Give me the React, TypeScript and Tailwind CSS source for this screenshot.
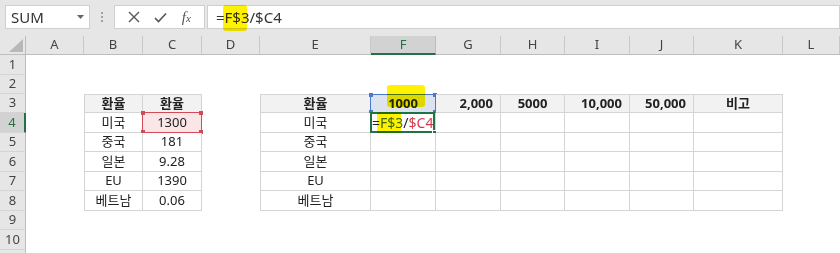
import React from "react";

const COLS = ["A", "B", "C", "D", "E", "F", "G", "H", "I", "J", "K", "L"];
const ROWS = [1, 2, 3, 4, 5, 6, 7, 8, 9, 10, 11];

const T1: Record<number, [string, string]> = {
  3: ["환율", "환율"],
  4: ["미국", "1300"],
  5: ["중국", "181"],
  6: ["일본", "9.28"],
  7: ["EU", "1390"],
  8: ["베트남", "0.06"],
};

const T2E: Record<number, string> = {
  3: "환율",
  4: "미국",
  5: "중국",
  6: "일본",
  7: "EU",
  8: "베트남",
};

// row 3 headings of the second table, columns F..K
const T2H: Record<number, { text: string; right?: boolean }> = {
  5: { text: "1000" },
  6: { text: "2,000", right: true },
  7: { text: "5000" },
  8: { text: "10,000", right: true },
  9: { text: "50,000", right: true },
  10: { text: "비고" },
};

function Corners({ color }: { color: string }) {
  return (
    <>
      <span className={`absolute -left-[2px] -top-[2px] w-[4px] h-[4px] ${color}`} />
      <span className={`absolute -right-[2px] -top-[2px] w-[4px] h-[4px] ${color}`} />
      <span className={`absolute -left-[2px] -bottom-[2px] w-[4px] h-[4px] ${color}`} />
      <span className={`absolute -right-[2px] -bottom-[2px] w-[4px] h-[4px] ${color}`} />
    </>
  );
}

function Cell({ r, c }: { r: number; c: number }) {
  const inT1 = r >= 3 && r <= 8 && (c === 1 || c === 2);
  const inT2 = r >= 3 && r <= 8 && c >= 4 && c <= 10;
  if (!inT1 && !inT2) return <div className="bg-white" />;

  let cls = "relative flex items-center justify-center whitespace-nowrap border-r border-b border-[#d4d4d4] text-[#222]";
  if (c === 1 || c === 4) cls += " border-l";
  if (r === 3) cls += " border-t bg-[#f2f2f2] font-bold";
  else cls += " bg-white";

  if (inT1) {
    const text = T1[r][c - 1];
    if (r === 4 && c === 2) {
      return (
        <div className={cls}>
          <div className="absolute -left-px -top-px -right-px -bottom-px border border-[#d24a57] bg-[#fbe6e7]">
            <Corners color="bg-[#d24a57]" />
          </div>
          <span className="relative">{text}</span>
        </div>
      );
    }
    return <div className={cls}>{text}</div>;
  }

  if (c === 4) return <div className={cls}>{T2E[r]}</div>;

  if (r === 3) {
    const h = T2H[c];
    if (c === 5) {
      return (
        <div className={cls}>
          <div className="absolute -left-px -top-px -right-px -bottom-px border border-[#4a78cf] bg-[#dde3ee]">
            <Corners color="bg-[#4a78cf]" />
          </div>
          <span className="relative">{h.text}</span>
        </div>
      );
    }
    return (
      <div className={h.right ? cls + " justify-end pr-[7px]" : cls}>{h.text}</div>
    );
  }

  if (r === 4 && c === 5) {
    return (
      <div className={cls + " justify-start"}>
        <div className="absolute -left-px -top-px right-0 -bottom-px border-2 border-[#217346]">
          <span className="absolute -right-[4px] -bottom-[4px] w-[5px] h-[5px] bg-[#217346] border border-white" />
        </div>
        <span className="relative pl-[1px] text-[14px]">
          =<span className="text-[#3f6fc8]">F$3</span>/<span className="text-[#d8384c]">$C4</span>
        </span>
      </div>
    );
  }

  return <div className={cls} />;
}

export default function App() {
  return (
    <div className="relative w-[840px] h-[253px] overflow-hidden bg-[#e6e6e6] font-['Noto_Sans','Noto_Sans_CJK_KR',sans-serif] text-[13px]">
      {/* top bar: name box, icons, formula */}
      <div className="h-[36px] flex items-start pt-[5px]">
        <div className="ml-[5px] w-[85px] h-[24px] bg-white border border-[#d0d0d0] flex items-center justify-between pl-[5px] pr-[5px]">
          <span className="text-[15px] text-[#333]">SUM</span>
          <svg width="7" height="4" viewBox="0 0 7 4">
            <path d="M0 0h7L3.5 4z" fill="#666" />
          </svg>
        </div>
        <div className="w-[24px] h-[24px] flex flex-col items-center justify-center gap-[2px]">
          <span className="w-[2px] h-[2px] bg-[#a0a0a0]" />
          <span className="w-[2px] h-[2px] bg-[#a0a0a0]" />
          <span className="w-[2px] h-[2px] bg-[#a0a0a0]" />
        </div>
        <div className="w-[91px] h-[24px] bg-white border border-[#d0d0d0] flex items-center justify-around px-[6px]">
          <svg width="12" height="12" viewBox="0 0 12 12">
            <path d="M1 1l10 10M11 1L1 11" stroke="#555" strokeWidth="1.4" />
          </svg>
          <svg width="13" height="11" viewBox="0 0 13 11">
            <path d="M1 6l3.5 3.5L12 1.5" stroke="#555" strokeWidth="1.6" fill="none" />
          </svg>
          <span className="font-['Liberation_Serif',serif] italic text-[15px] text-[#555] leading-none">
            f<span className="text-[11px]">x</span>
          </span>
        </div>
        <div className="ml-[2px] flex-1 h-[24px] bg-white border border-[#d0d0d0] flex items-center pl-[8px] text-[15px] text-[#333]">
          =F$3/$C4
        </div>
      </div>

      {/* sheet */}
      <div className="grid grid-cols-[26px_58px_59px_59px_58px_111px_65px_65px_64px_65px_64px_89px_57px] grid-rows-[19px_20px_19px_19px_20px_19px_20px_19px_20px_19px_20px_20px]">
        <div className="relative bg-[#e6e6e6] border-r border-b border-[#bdbdbd]">
          <svg className="absolute right-[2px] bottom-[2px]" width="14" height="13" viewBox="0 0 14 13">
            <path d="M14 0V13H0z" fill="#b8b8b8" />
          </svg>
        </div>
        {COLS.map((l) =>
          l === "F" ? (
            <div key={l} className="flex items-center justify-center bg-[#d2d2d2] border-r border-[#bdbdbd] border-b-2 border-b-[#217346] text-[#217346]">
              {l}
            </div>
          ) : (
            <div key={l} className="flex items-center justify-center bg-[#e6e6e6] border-r border-b border-[#c8c8c8] border-b-[#bdbdbd] text-[#444]">
              {l}
            </div>
          )
        )}
        {ROWS.map((r) => (
          <React.Fragment key={r}>
            {r === 4 ? (
              <div className="flex items-center justify-center bg-[#d2d2d2] border-b border-[#d4d4d4] border-r-2 border-r-[#217346] text-[#217346]">
                {r}
              </div>
            ) : (
              <div className="flex items-center justify-center bg-[#e6e6e6] border-b border-[#d4d4d4] border-r border-r-[#bdbdbd] text-[#444]">
                {r < 11 ? r : null}
              </div>
            )}
            {COLS.map((_, c) => (
              <Cell key={c} r={r} c={c} />
            ))}
          </React.Fragment>
        ))}
      </div>

      {/* highlighter marks */}
      <div className="absolute left-[223px] top-[5px] w-[24px] h-[26px] bg-[#fff200] rounded-[3px] mix-blend-multiply" />
      <div className="absolute left-[387px] top-[85px] w-[38px] h-[22px] bg-[#fff200] rounded-[3px] mix-blend-multiply" />
      <div className="absolute left-[377px] top-[112px] w-[24px] h-[21px] bg-[#fff200] rounded-[3px] mix-blend-multiply" />
    </div>
  );
}
